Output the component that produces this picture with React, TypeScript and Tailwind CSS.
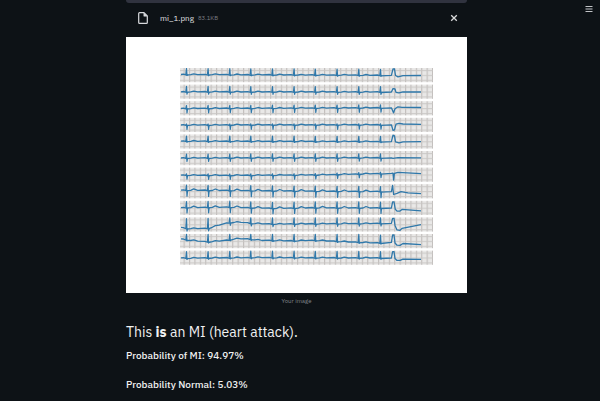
import React from "react";

type Point = [number, number];

interface Lead {
  name: string;
  baseline: Point[];
  up: number;
  down: number;
  tail: Point[];
}

const BEATS = [6.7, 28.3, 50, 71, 92.7, 114.3, 135.5, 157.3, 179, 200.7];
const PITCH = 16.6;
const STRIP = 14.2;

const LEADS: Lead[] = [
  { name: "I", baseline: [[1, 6.5], [210, 7.3]], up: 6, down: 1, tail: [[213, 0.8], [214.5, 1], [215.5, 7.5], [218, 8.8], [223, 7.6], [241, 7.5]] },
  { name: "II", baseline: [[1, 7.2], [210, 7.4]], up: 5.4, down: 2.4, tail: [[213, 4], [215, 4.4], [216, 7.8], [219, 8.3], [223, 7.2], [241, 7.4]] },
  { name: "III", baseline: [[1, 7.3], [210, 6.6]], up: 3, down: 4.4, tail: [[213.5, 11.6], [215, 7.5], [218, 5.6], [222, 6.2], [241, 6.3]] },
  { name: "aVR", baseline: [[1, 7.2], [210, 7]], up: 1, down: 4.4, tail: [[213, 12.6], [214.5, 12], [216, 6.4], [219, 5.5], [223, 6.2], [241, 6.5]] },
  { name: "aVL", baseline: [[1, 6.8], [210, 7.2]], up: 5.2, down: 1, tail: [[213, 0.8], [214.5, 1.4], [215.5, 7.5], [219, 8.5], [223, 7.4], [241, 7.3]] },
  { name: "aVF", baseline: [[1, 7], [210, 6.8]], up: 4, down: 3.4, tail: [[213, 7.3], [218, 6.6], [241, 6.8]] },
  { name: "V1", baseline: [[1, 7.6], [50, 7.8], [135, 7.4], [180, 6.4], [210, 5.8]], up: 1.4, down: 4, tail: [[213, 5.5], [213.6, 12.4], [214.4, 5.8], [218, 4.8], [241, 6]] },
  { name: "V2", baseline: [[1, 6], [50, 6.3], [135, 7], [210, 7.4]], up: 5, down: 6, tail: [[212.6, 1.3], [213.6, 10.3], [217, 9.2], [221, 7.4], [228, 8.6], [241, 9.5]] },
  { name: "V3", baseline: [[1, 6.8], [50, 6.4], [92, 7.6], [135, 7], [210, 7.2]], up: 6, down: 5.4, tail: [[212.6, 1], [214, 1], [215.3, 8.5], [217, 10.3], [220, 10.2], [222, 8.6], [241, 10]] },
  { name: "V4", baseline: [[1, 10], [7, 11.2], [28, 11], [35, 9], [43, 6.4], [52, 5], [62, 4.8], [71, 6], [92, 6.7], [135, 6.4], [210, 6]], up: 10, down: 2.6, tail: [[212.6, 1], [214, 1], [215, 8], [217, 12.5], [220, 12.9], [222, 11], [241, 7.2]] },
  { name: "V5", baseline: [[1, 4.8], [7, 6], [28, 8], [45, 6.6], [56, 4.8], [66, 4.8], [82, 6.4], [114, 6.8], [135, 6.4], [170, 8], [200, 9], [210, 8.4]], up: 8, down: 1, tail: [[212.6, 1], [214, 1], [215, 9], [217, 11.2], [220, 11.4], [223, 9.5], [241, 10.7]] },
  { name: "V6", baseline: [[1, 7.2], [7, 7.6], [66, 7], [210, 7.4]], up: 6.5, down: 1.2, tail: [[212.6, 1], [214, 1], [215, 8], [217, 9.8], [220, 9.8], [223, 8.6], [241, 8.8]] },
];

function levelAt(points: Point[], x: number): number {
  for (let i = 1; i < points.length; i++) {
    const [x0, y0] = points[i - 1];
    const [x1, y1] = points[i];
    if (x <= x1) return y0 + ((y1 - y0) * (x - x0)) / (x1 - x0);
  }
  return points[points.length - 1][1];
}

function spikeTop(lead: Lead, beat: number): number {
  return Math.max(0.4, levelAt(lead.baseline, beat) - lead.up);
}

function trace(lead: Lead): string {
  const pts: Point[] = [[1, lead.baseline[0][1]]];
  const wave = lead.name === "V2" || lead.name === "V3" ? -1.4 : -0.7;
  BEATS.forEach((b) => {
    const y = levelAt(lead.baseline, b);
    pts.push([b - 3.4, levelAt(lead.baseline, b - 3.4) - 0.3], [b, y + 0.5]);
    if (b < 200) {
      pts.push(
        [b + 4, levelAt(lead.baseline, b + 4) + 0.1],
        [b + 7, levelAt(lead.baseline, b + 7) + wave],
        [b + 11, levelAt(lead.baseline, b + 11) + 0.1]
      );
    }
  });
  pts.push([211.4, levelAt(lead.baseline, 210)], ...lead.tail);
  return pts.map(([x, y]) => `${x.toFixed(1)},${y.toFixed(1)}`).join(" ");
}

function spikes(lead: Lead): string {
  return BEATS.map((b) => {
    const y = levelAt(lead.baseline, b);
    return `M${b - 0.9} ${y.toFixed(1)}L${b - 0.2} ${spikeTop(lead, b).toFixed(1)}L${b + 0.3} ${(y + lead.down).toFixed(1)}L${b + 0.9} ${y.toFixed(1)}`;
  }).join("");
}

function EcgChart() {
  return (
    <svg viewBox="0 0 253 198" className="block w-full" role="img" aria-label="Your image">
      <defs>
        <pattern id="grid" width="5.4" height="4.9" patternUnits="userSpaceOnUse">
          <rect width="5.4" height="4.9" fill="#e9e8e7" />
          <path d="M4.2 0V4.9" stroke="#bdb9b7" strokeWidth="1" />
          <path d="M0 2.6H5.4" stroke="#c8c5c3" strokeWidth="0.9" />
        </pattern>
      </defs>
      {LEADS.map((lead, i) => (
        <g key={lead.name} transform={`translate(0 ${(i * PITCH).toFixed(1)})`}>
          <rect width="253" height={STRIP} fill="url(#grid)" />
          <polyline points={trace(lead)} fill="none" stroke="#2f78aa" strokeWidth="1.3" strokeLinejoin="round" />
          <path d={spikes(lead)} fill="none" stroke="#2f78aa" strokeWidth="1.2" strokeLinejoin="round" />
        </g>
      ))}
    </svg>
  );
}

export default function App() {
  return (
    <div className="relative min-h-screen bg-[#0d1216] font-['IBM_Plex_Sans','Noto_Sans',sans-serif] text-[#f0f1f1]">
      <button type="button" aria-label="Menu" className="absolute top-1 right-1.5 p-px text-[#c2c4c7]">
        <svg viewBox="0 0 8 8" className="block size-2">
          <path d="M0.5 1.5H7.5M0.5 4H7.5M0.5 6.5H7.5" stroke="currentColor" strokeWidth="1.1" />
        </svg>
      </button>

      <main className="mx-auto w-[57%] -translate-x-1 pl-px">
        <div className="h-[3px] rounded-b-sm bg-[#30333f]" />

        <div className="flex h-[34px] items-center pr-2 pb-1 pl-3">
          <svg viewBox="0 0 10 12" className="mr-3 block h-3 w-2.5" fill="none" stroke="#d8dadd" strokeWidth="1.2" strokeLinejoin="round">
            <path d="M1.6 0.7H6L9.3 4V10.4Q9.3 11.3 8.4 11.3H1.6Q0.7 11.3 0.7 10.4V1.6Q0.7 0.7 1.6 0.7Z" />
            <path d="M5.8 0.9V4.2H9.1Z" fill="#d8dadd" strokeWidth="0.5" />
          </svg>
          <span className="text-[8px] text-[#e6e7e8]">mi_1.png</span>
          <span className="ml-1 text-[6px] text-[#7b7e84]">83.1KB</span>
          <button type="button" aria-label="Remove file" className="ml-auto p-px text-[#d9dadb]">
            <svg viewBox="0 0 8 8" className="block size-2">
              <path d="M1.2 1.2L6.8 6.8M6.8 1.2L1.2 6.8" stroke="currentColor" strokeWidth="1.3" />
            </svg>
          </button>
        </div>

        <figure>
          <div className="bg-white pt-[31px] pr-[34px] pb-[27px] pl-[54px]">
            <EcgChart />
          </div>
          <figcaption className="mt-1 text-center text-[6px] leading-2 text-[#84878c]">Your image</figcaption>
        </figure>

        <h1 className="mt-[15px] text-sm leading-6">
          This <strong className="font-bold">is</strong> an MI (heart attack).
        </h1>
        <p className="mt-1 text-[10px] leading-4 font-medium">Probability of MI: 94.97%</p>
        <p className="mt-[13px] text-[10px] leading-4 font-medium">Probability Normal: 5.03%</p>
      </main>
    </div>
  );
}
